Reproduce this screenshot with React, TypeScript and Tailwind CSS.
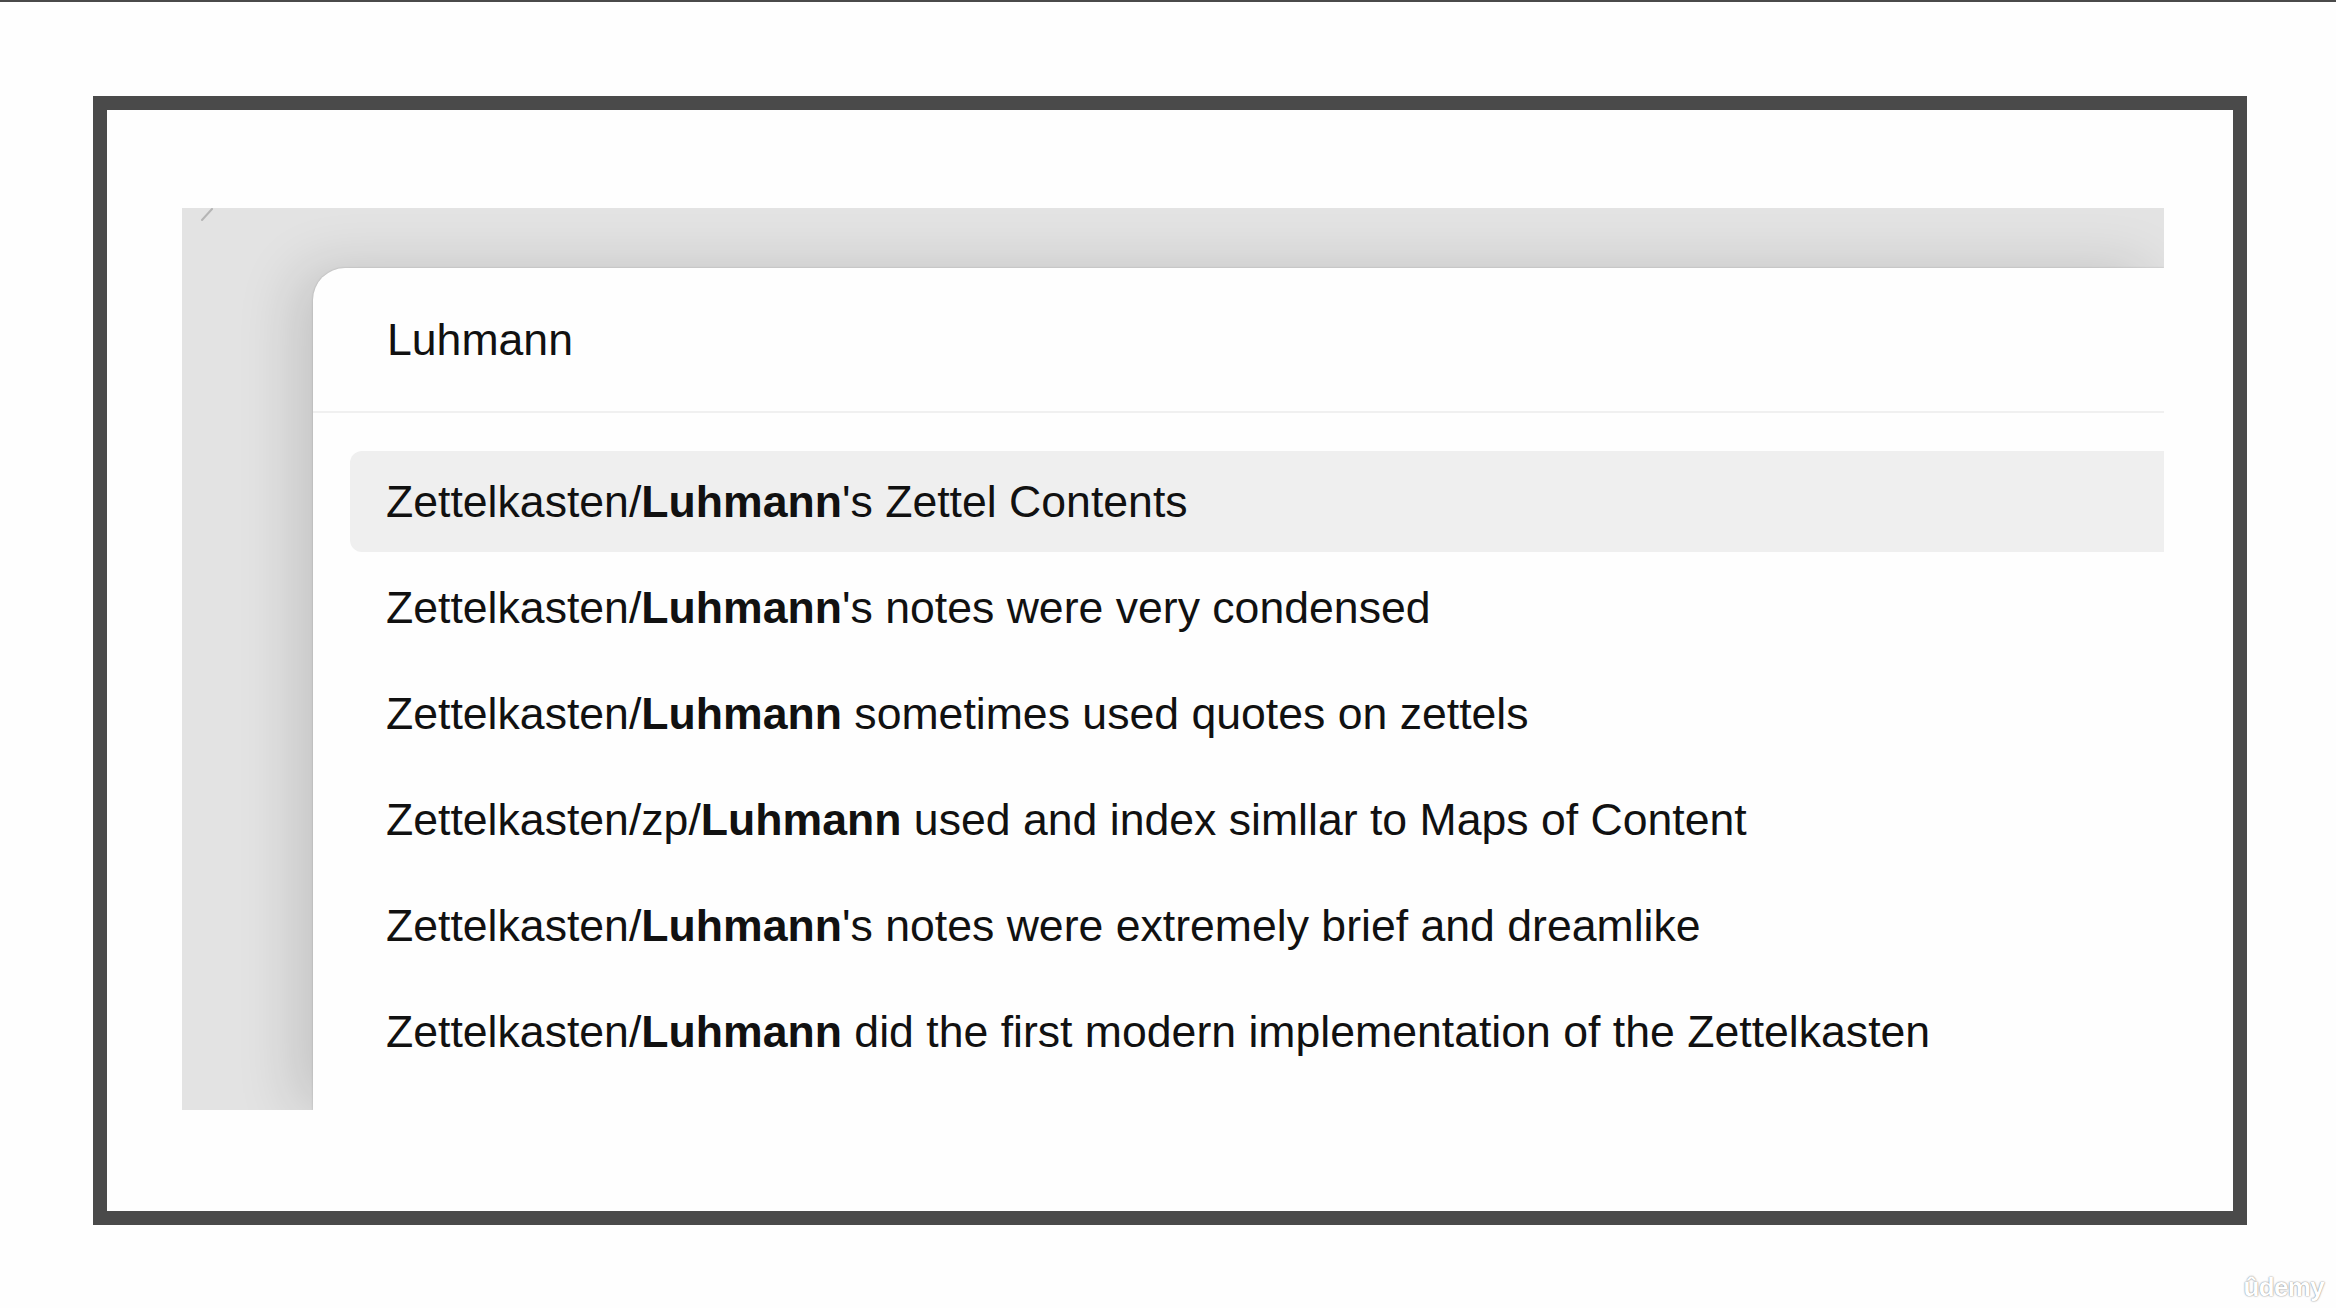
const rows = [
  { pre: "Zettelkasten/", rest: "'s Zettel Contents" },
  { pre: "Zettelkasten/", rest: "'s notes were very condensed" },
  { pre: "Zettelkasten/", rest: " sometimes used quotes on zettels" },
  { pre: "Zettelkasten/zp/", rest: " used and index simllar to Maps of Content" },
  { pre: "Zettelkasten/", rest: "'s notes were extremely brief and dreamlike" },
  { pre: "Zettelkasten/", rest: " did the first modern implementation of the Zettelkasten" },
]

export default function App() {
  return (
    <div
      className="relative w-[2336px] h-[1308px] bg-[#fefefe] border-t-2 border-[#4a4a4a] overflow-hidden text-[#111111]"
      style={{ fontFamily: '"Liberation Sans", Arial, sans-serif' }}
    >
      {/* slide frame */}
      <div className="ml-[93px] mt-[94px] w-[2154px] h-[1129px] border-[14px] border-[#4a4a4a] bg-[#fefefe] pl-[75px] pt-[98px]">
        {/* screenshot crop */}
        <div className="relative w-[1982px] h-[902px] bg-[#e3e3e3] overflow-hidden pl-[131px] pt-[60px] flex">
          <svg className="absolute left-[18px] top-[0px]" width="14" height="14" viewBox="0 0 14 14">
            <line x1="2" y1="12" x2="12" y2="1" stroke="#b5b5b5" strokeWidth="2" strokeLinecap="round" />
          </svg>
          <div className="flex-1 bg-[#fefefe] rounded-tl-[32px] shadow-[-18px_0_60px_rgba(0,0,0,0.14),0_0_2px_rgba(0,0,0,0.22)] flex flex-col">
            <div className="h-[145px] flex items-center pl-[74px] pt-[2px] border-b-2 border-[#f0f0f0]">
              <span className="text-[44.6px] leading-none">Luhmann</span>
            </div>
            <div className="flex flex-col gap-[5px] pt-[38px] pl-[37px]">
              {rows.map((r, i) => (
                <div
                  key={i}
                  className={`h-[101px] flex items-center pl-[36px] pt-[2px] rounded-l-[12px] text-[44.6px] leading-none whitespace-nowrap ${
                    i === 0 ? "bg-[#efefef]" : ""
                  }`}
                >
                  <span>{r.pre}</span>
                  <span className="font-bold">Luhmann</span>
                  <span className="whitespace-pre">{r.rest}</span>
                </div>
              ))}
            </div>
          </div>
        </div>
      </div>

      {/* watermark */}
      <div
        className="absolute right-[12px] top-[1272px] text-[26px] font-bold text-white tracking-tight leading-none"
        style={{ textShadow: "0 0 2px rgba(0,0,0,0.4), 0 0 1px rgba(0,0,0,0.3)" }}
      >
        ûdemy
      </div>
    </div>
  )
}
